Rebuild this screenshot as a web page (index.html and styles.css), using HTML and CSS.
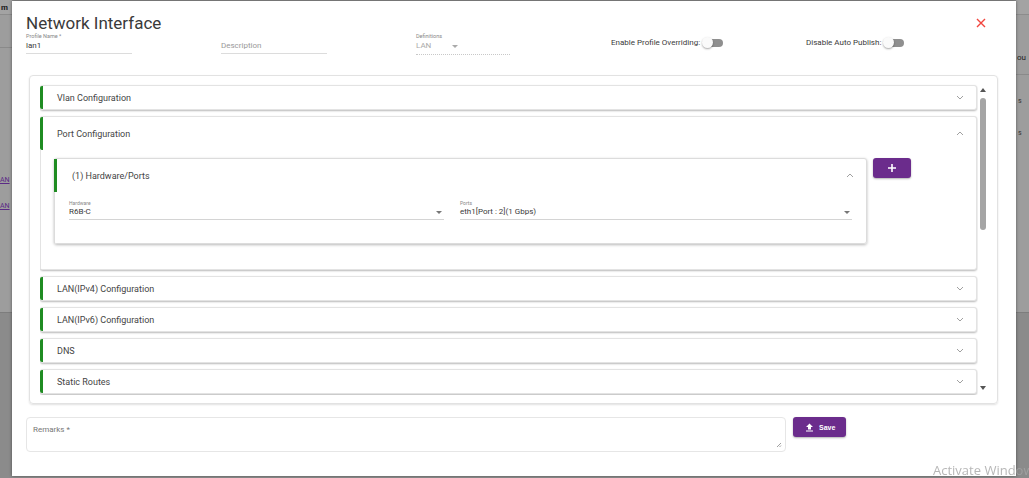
FILE: index.html
```html
<!DOCTYPE html>
<html lang="en">
<head>
    <meta charset="UTF-8">
    <title>Network Interface</title>
    <link rel="stylesheet" href="styles.css">
</head>
<body>

<div class="bg-side bg-left">
    <div class="bg-top">m</div>
    <div class="bg-bar"></div>
    <div class="bg-list">
        <a class="bg-link">AN</a>
        <a class="bg-link">AN</a>
    </div>
    <div class="bg-foot"></div>
</div>

<div class="modal">
    <div class="modal-head">
        <h1>Network Interface</h1>
        <svg class="close" width="10" height="10" viewBox="0 0 10 10">
            <path d="M1 1 L9 9 M9 1 L1 9" stroke="#f2453d" stroke-width="1.4" fill="none"/>
        </svg>
    </div>

    <div class="top-fields">
        <div class="field f-name">
            <div class="label">Profile Name *</div>
            <div class="value">lan1</div>
        </div>
        <div class="field f-desc">
            <div class="label"></div>
            <div class="value placeholder">Description</div>
        </div>
        <div class="field f-def">
            <div class="label">Definitions</div>
            <div class="value muted">LAN <span class="caret"></span></div>
        </div>
        <div class="switch-field s-one">Enable Profile Overriding: <span class="switch"></span></div>
        <div class="switch-field">Disable Auto Publish: <span class="switch"></span></div>
    </div>

    <div class="panel-box">
        <div class="panel-scroll">
            <div class="acc-item">
                <div class="acc-head">Vlan Configuration
                    <svg class="chev" width="8" height="5" viewBox="0 0 8 5"><polyline points="1,1 4,4 7,1"/></svg>
                </div>
            </div>
            <div class="acc-item open">
                <div class="acc-head">Port Configuration
                    <svg class="chev" width="8" height="5" viewBox="0 0 8 5"><polyline points="1,4 4,1 7,4"/></svg>
                </div>
                <div class="acc-body">
                    <div class="card">
                        <div class="card-head">(1) Hardware/Ports
                            <svg class="chev" width="8" height="5" viewBox="0 0 8 5"><polyline points="1,4 4,1 7,4"/></svg>
                        </div>
                        <div class="card-body">
                            <div class="select">
                                <div class="label">Hardware</div>
                                <div class="value">R6B-C <span class="caret"></span></div>
                            </div>
                            <div class="select">
                                <div class="label">Ports</div>
                                <div class="value">eth1[Port : 2](1 Gbps) <span class="caret"></span></div>
                            </div>
                        </div>
                    </div>
                    <button class="add-btn">
                        <svg width="10" height="10" viewBox="0 0 10 10"><path d="M5 1 V9 M1 5 H9" stroke="#fff" stroke-width="1.6"/></svg>
                    </button>
                </div>
            </div>
            <div class="acc-item">
                <div class="acc-head">LAN(IPv4) Configuration
                    <svg class="chev" width="8" height="5" viewBox="0 0 8 5"><polyline points="1,1 4,4 7,1"/></svg>
                </div>
            </div>
            <div class="acc-item">
                <div class="acc-head">LAN(IPv6) Configuration
                    <svg class="chev" width="8" height="5" viewBox="0 0 8 5"><polyline points="1,1 4,4 7,1"/></svg>
                </div>
            </div>
            <div class="acc-item">
                <div class="acc-head">DNS
                    <svg class="chev" width="8" height="5" viewBox="0 0 8 5"><polyline points="1,1 4,4 7,1"/></svg>
                </div>
            </div>
            <div class="acc-item">
                <div class="acc-head">Static Routes
                    <svg class="chev" width="8" height="5" viewBox="0 0 8 5"><polyline points="1,1 4,4 7,1"/></svg>
                </div>
            </div>
        </div>
        <div class="fake-scrollbar">
            <span class="arrow-up"></span>
            <span class="thumb"></span>
            <span class="arrow-down"></span>
        </div>
    </div>

    <div class="bottom-row">
        <div class="remarks">
            Remarks *
            <svg class="grip" width="6" height="6" viewBox="0 0 6 6"><path d="M5 1 L1 5 M5 3.5 L3.5 5" stroke="#888" stroke-width="0.8"/></svg>
        </div>
        <button class="save-btn">
            <svg width="9" height="9" viewBox="0 0 9 9"><path d="M4.5 0.5 L8 4 H6 V6.5 H3 V4 H1 Z M1 7.5 H8 V8.6 H1 Z" fill="#fff"/></svg>
            Save
        </button>
    </div>
</div>

<div class="bg-side bg-right">
    <div class="bg-top"></div>
    <div class="bg-bar"><span class="bg-word">ou</span></div>
    <div class="bg-list">
        <span class="bg-char">s</span>
        <span class="bg-char">s</span>
    </div>
    <div class="bg-foot"></div>
</div>

<div class="watermark">Activate Windows</div>

</body>
</html>
```

FILE: styles.css
```css
* {
    box-sizing: border-box;
}
html, body {
    margin: 0;
    height: 100%;
}
body {
    display: flex;
    width: 1029px;
    height: 478px;
    overflow: hidden;
    background: #8e8e8e;
    font-family: Roboto, "Noto Sans", sans-serif;
    color: #333;
}

/* page behind the dialog */
.bg-side {
    display: flex;
    flex-direction: column;
    background: #9d9d9d;
    overflow: hidden;
    white-space: nowrap;
    font-size: 8px;
}
.bg-left {
    width: 12px;
}
.bg-right {
    width: 13px;
}
.bg-top {
    height: 15px;
    line-height: 15px;
    background: #a3a3a3;
    border-bottom: 1px solid #8c8c8c;
    color: #1a1a1a;
    font-weight: bold;
    padding-left: 1px;
}
.bg-bar {
    height: 33px;
    border-bottom: 1px solid #8a8a8a;
}
.bg-right .bg-bar {
    height: 60px;
    padding-top: 38px;
}
.bg-word {
    color: #222;
    margin-left: 1px;
}
.bg-list {
    display: flex;
    flex-direction: column;
    height: 264px;
    padding-top: 128px;
    gap: 18px;
}
.bg-right .bg-list {
    height: 237px;
    padding-top: 22px;
    gap: 24px;
}
.bg-link {
    color: #5b2a86;
    text-decoration: underline;
    font-size: 7px;
    margin-left: 0;
}
.bg-char {
    color: #333;
    font-size: 7px;
    margin-left: 2px;
}
.bg-foot {
    flex: 1;
    background: #8b8b8b;
    border-top: 1px solid #7d7d7d;
}

/* dialog */
.modal {
    width: 1004px;
    height: 475px;
    margin-top: 1px;
    background: #fff;
    box-shadow: 0 0 3px rgba(0, 0, 0, 0.45);
    padding: 11px 30px 0 14px;
    position: relative;
    z-index: 1;
}
.modal-head {
    display: flex;
    justify-content: space-between;
    align-items: center;
    height: 21px;
}
.modal-head h1 {
    margin: 0;
    font-size: 17px;
    line-height: 20px;
    font-weight: 400;
    color: #3a3a3a;
}

.top-fields {
    display: flex;
    align-items: flex-start;
    height: 22px;
}
.field {
    padding-bottom: 1px;
    border-bottom: 1px solid #dcdcdc;
}
.label {
    font-size: 5.5px;
    line-height: 7px;
    height: 7px;
    color: #888;
}
.value {
    font-size: 8px;
    line-height: 12px;
    color: #3a3a3a;
    display: flex;
    justify-content: space-between;
    align-items: center;
}
.placeholder {
    color: #999;
}
.muted {
    color: #aaa;
    justify-content: flex-start;
    gap: 21px;
}
.f-name {
    width: 106px;
    margin-right: 89px;
}
.f-desc {
    width: 106px;
    margin-right: 89px;
}
.f-def {
    width: 94px;
    margin-right: 101px;
    border-bottom: 1px dotted #c8c8c8;
    padding-bottom: 2px;
}
.caret {
    display: inline-block;
    width: 0;
    height: 0;
    border-left: 3px solid transparent;
    border-right: 3px solid transparent;
    border-top: 3px solid #777;
    margin-right: 2px;
}
.f-def .caret {
    border-top-color: #aaa;
}
.switch-field {
    display: flex;
    align-items: center;
    font-size: 8px;
    line-height: 10px;
    padding-top: 4px;
    color: #3a3a3a;
}
.s-one {
    width: 195px;
}
.switch {
    position: relative;
    display: inline-block;
    width: 22px;
    height: 12px;
    margin-left: 2px;
}
.switch::before {
    content: "";
    position: absolute;
    left: 4px;
    top: 2px;
    width: 17px;
    height: 8px;
    border-radius: 4px;
    background: #8f8f8f;
}
.switch::after {
    content: "";
    position: absolute;
    left: 0;
    top: 0;
    width: 11px;
    height: 11px;
    border-radius: 50%;
    background: #fafafa;
    box-shadow: 0 1px 2px rgba(0, 0, 0, 0.35);
}

/* sections */
.panel-box {
    display: flex;
    margin: 20px 0 0 3px;
    width: 969px;
    height: 329px;
    padding: 8px 9px 8px 10px;
    border: 1px solid #e2e2e2;
    border-radius: 4px;
    box-shadow: 0 1px 2px rgba(0, 0, 0, 0.12);
}
.panel-scroll {
    flex: 1;
    height: 311px;
    overflow: hidden;
    padding: 1px 1px 0 0;
}
.acc-item {
    background: #fff;
    border: 1px solid #e3e3e3;
    border-left: none;
    border-radius: 3px;
    box-shadow: 0 1px 2px rgba(0, 0, 0, 0.28);
    margin-bottom: 6px;
}
.acc-head {
    display: flex;
    justify-content: space-between;
    align-items: center;
    height: 23px;
    padding: 0 12px 0 14px;
    border-left: 3px solid #1f8c22;
    border-radius: 2px 0 0 2px;
    font-size: 9px;
    color: #444;
}
.open .acc-head {
    height: 33px;
}
.chev polyline {
    fill: none;
    stroke: #a0a0a0;
    stroke-width: 1;
}
.acc-body {
    display: flex;
    align-items: flex-start;
    gap: 6px;
    border-left: 1px solid #e3e3e3;
    padding: 8px 0 25px 13px;
}
.card {
    width: 813px;
    border: 1px solid #dcdcdc;
    border-left: none;
    border-radius: 3px;
    box-shadow: 0 1px 3px rgba(0, 0, 0, 0.28);
}
.card-head {
    display: flex;
    justify-content: space-between;
    align-items: center;
    height: 33px;
    padding: 0 12px 0 15px;
    border-left: 3px solid #1f8c22;
    font-size: 9px;
    color: #444;
}
.card-body {
    display: grid;
    grid-template-columns: 375px 392px;
    gap: 16px;
    border-left: 1px solid #dcdcdc;
    padding: 8px 14px 23px 14px;
}
.select .label {
    height: 6px;
    line-height: 6px;
    font-size: 5px;
}
.select .value {
    padding-bottom: 1px;
    border-bottom: 1px solid #d4d4d4;
}
.add-btn {
    width: 38px;
    height: 20px;
    border: none;
    border-radius: 3px;
    background: #6b2c8c;
    box-shadow: 0 1px 2px rgba(0, 0, 0, 0.3);
    display: flex;
    align-items: center;
    justify-content: center;
    padding: 0;
}

.fake-scrollbar {
    width: 10px;
    display: flex;
    flex-direction: column;
    align-items: center;
}
.arrow-up {
    margin-top: 4px;
    border-left: 3.5px solid transparent;
    border-right: 3.5px solid transparent;
    border-bottom: 4px solid #555;
}
.thumb {
    margin-top: 6px;
    width: 6px;
    height: 132px;
    border-radius: 3px;
    background: #a5a5a5;
}
.arrow-down {
    margin-top: auto;
    margin-bottom: 5px;
    border-left: 3.5px solid transparent;
    border-right: 3.5px solid transparent;
    border-top: 4px solid #555;
}

/* remarks + save */
.bottom-row {
    display: flex;
    align-items: flex-start;
    gap: 7px;
    margin-top: 13px;
}
.remarks {
    position: relative;
    width: 760px;
    height: 35px;
    border: 1px solid #e6e6e6;
    border-radius: 4px;
    padding: 7px 6px;
    font-size: 8px;
    line-height: 10px;
    color: #777;
}
.grip {
    position: absolute;
    right: 3px;
    bottom: 3px;
}
.save-btn {
    display: flex;
    align-items: center;
    gap: 5px;
    width: 53px;
    height: 20px;
    padding: 0 0 0 12px;
    border: none;
    border-radius: 3px;
    background: #6b2c8c;
    box-shadow: 0 1px 2px rgba(0, 0, 0, 0.3);
    color: #fff;
    font-family: "Liberation Sans", Arial, sans-serif;
    font-size: 7px;
    font-weight: bold;
}

.watermark {
    position: fixed;
    left: 933px;
    top: 461px;
    z-index: 2;
    font-family: "Open Sans", sans-serif;
    font-size: 13px;
    color: rgba(165, 165, 165, 0.8);
    white-space: nowrap;
}
```
